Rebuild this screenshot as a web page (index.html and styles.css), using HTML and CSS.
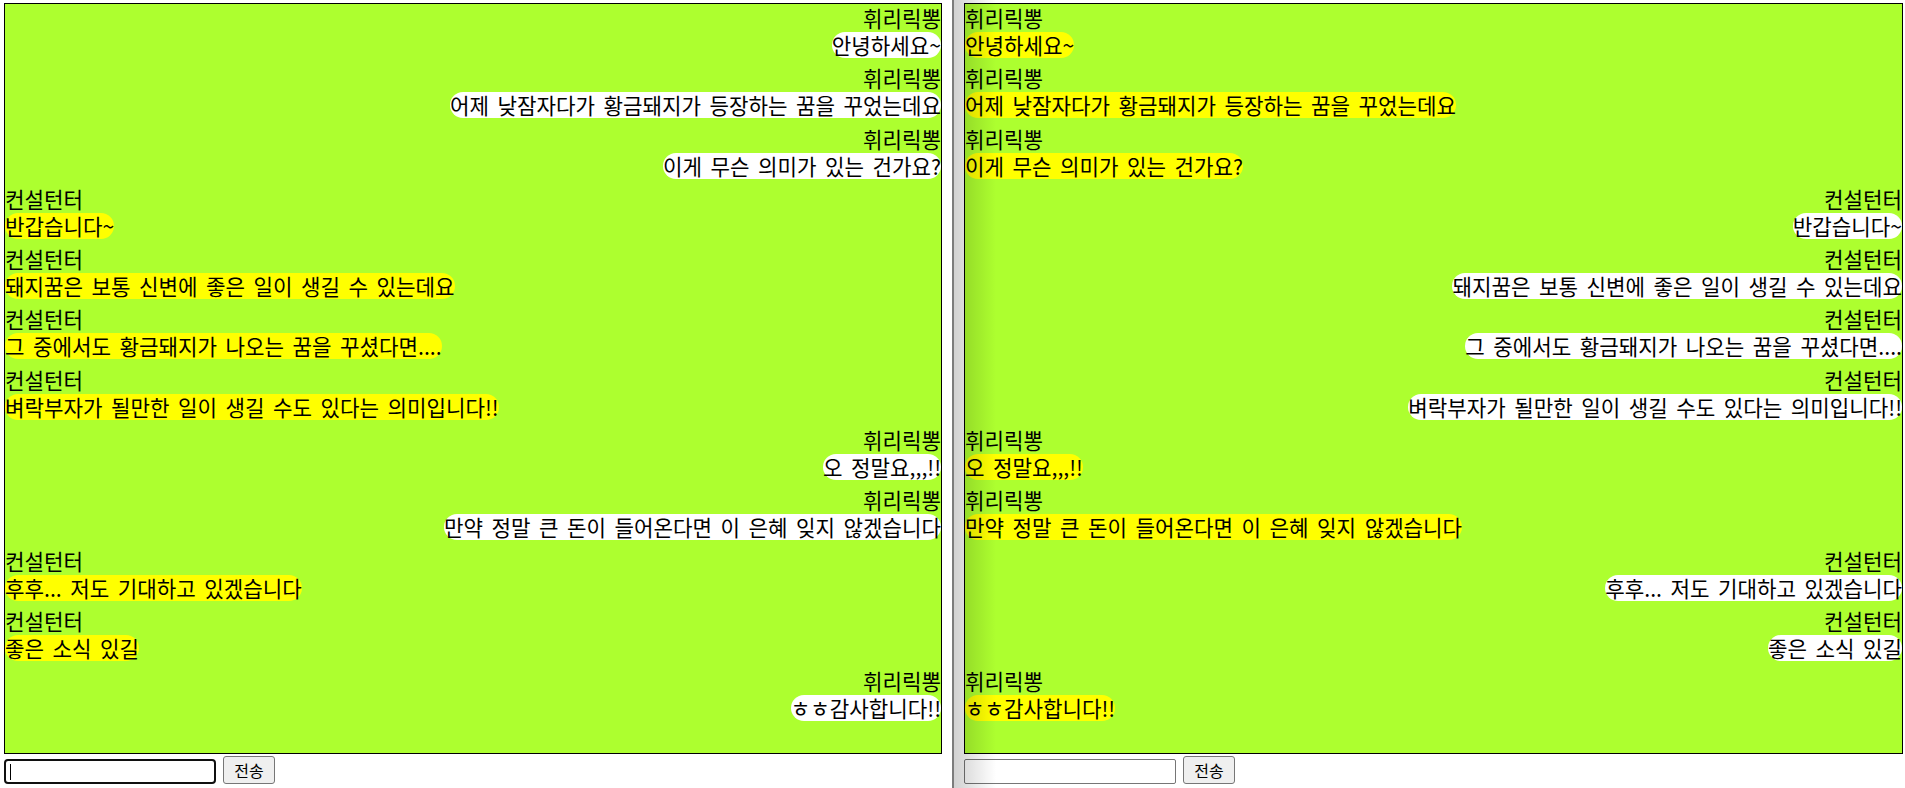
FILE: index.html
```html
<!DOCTYPE html>
<html lang="ko">
<head>
    <meta charset="UTF-8">
    <meta name="viewport" content="width=device-width, initial-scale=1.0">
    <title>채팅</title>
    <link rel="stylesheet" href="styles.css">
</head>
<body>

<div class="frames">
    <!-- 휘리릭뽕 화면 -->
    <div class="pane pane-left">
        <div class="chat-box">
            <div class="msg me"><div class="name">휘리릭뽕</div><span class="bubble white">안녕하세요~</span></div>
            <div class="msg me"><div class="name">휘리릭뽕</div><span class="bubble white">어제 낮잠자다가 황금돼지가 등장하는 꿈을 꾸었는데요</span></div>
            <div class="msg me"><div class="name">휘리릭뽕</div><span class="bubble white">이게 무슨 의미가 있는 건가요?</span></div>
            <div class="msg"><div class="name">컨설턴터</div><span class="bubble yellow">반갑습니다~</span></div>
            <div class="msg"><div class="name">컨설턴터</div><span class="bubble yellow">돼지꿈은 보통 신변에 좋은 일이 생길 수 있는데요</span></div>
            <div class="msg"><div class="name">컨설턴터</div><span class="bubble yellow">그 중에서도 황금돼지가 나오는 꿈을 꾸셨다면....</span></div>
            <div class="msg"><div class="name">컨설턴터</div><span class="bubble yellow">벼락부자가 될만한 일이 생길 수도 있다는 의미입니다!!</span></div>
            <div class="msg me"><div class="name">휘리릭뽕</div><span class="bubble white">오 정말요,,,!!</span></div>
            <div class="msg me"><div class="name">휘리릭뽕</div><span class="bubble white">만약 정말 큰 돈이 들어온다면 이 은혜 잊지 않겠습니다</span></div>
            <div class="msg"><div class="name">컨설턴터</div><span class="bubble yellow">후후... 저도 기대하고 있겠습니다</span></div>
            <div class="msg"><div class="name">컨설턴터</div><span class="bubble yellow">좋은 소식 있길</span></div>
            <div class="msg me"><div class="name">휘리릭뽕</div><span class="bubble white">ㅎㅎ감사합니다!!</span></div>
        </div>
        <div class="send-row">
            <div class="field focused"><input type="text" class="msg-input"></div>
            <button class="btn-send">전송</button>
        </div>
    </div>

    <div class="divider"></div>

    <!-- 컨설턴터 화면 -->
    <div class="pane pane-right">
        <div class="chat-box">
            <div class="msg"><div class="name">휘리릭뽕</div><span class="bubble yellow">안녕하세요~</span></div>
            <div class="msg"><div class="name">휘리릭뽕</div><span class="bubble yellow">어제 낮잠자다가 황금돼지가 등장하는 꿈을 꾸었는데요</span></div>
            <div class="msg"><div class="name">휘리릭뽕</div><span class="bubble yellow">이게 무슨 의미가 있는 건가요?</span></div>
            <div class="msg me"><div class="name">컨설턴터</div><span class="bubble white">반갑습니다~</span></div>
            <div class="msg me"><div class="name">컨설턴터</div><span class="bubble white">돼지꿈은 보통 신변에 좋은 일이 생길 수 있는데요</span></div>
            <div class="msg me"><div class="name">컨설턴터</div><span class="bubble white">그 중에서도 황금돼지가 나오는 꿈을 꾸셨다면....</span></div>
            <div class="msg me"><div class="name">컨설턴터</div><span class="bubble white">벼락부자가 될만한 일이 생길 수도 있다는 의미입니다!!</span></div>
            <div class="msg"><div class="name">휘리릭뽕</div><span class="bubble yellow">오 정말요,,,!!</span></div>
            <div class="msg"><div class="name">휘리릭뽕</div><span class="bubble yellow">만약 정말 큰 돈이 들어온다면 이 은혜 잊지 않겠습니다</span></div>
            <div class="msg me"><div class="name">컨설턴터</div><span class="bubble white">후후... 저도 기대하고 있겠습니다</span></div>
            <div class="msg me"><div class="name">컨설턴터</div><span class="bubble white">좋은 소식 있길</span></div>
            <div class="msg"><div class="name">휘리릭뽕</div><span class="bubble yellow">ㅎㅎ감사합니다!!</span></div>
        </div>
        <div class="send-row">
            <div class="field"><input type="text" class="msg-input"></div>
            <button class="btn-send">전송</button>
        </div>
    </div>
</div>

</body>
</html>
```

FILE: styles.css
```css
:root {
    --chat-bg: #adff2f;
    --bubble-yellow: #ffff00;
    --bubble-white: #ffffff;
}

html, body {
    margin: 0;
    height: 100%;
    background: #fff;
    overflow: hidden;
}

body {
    font-family: "Noto Sans CJK KR", "Noto Sans", sans-serif;
    color: #000;
}

.frames {
    display: flex;
    height: 100vh;
}

.pane {
    box-sizing: border-box;
    padding-top: 3px;
}

.pane-left {
    width: 952px;
    padding-left: 4px;
    padding-right: 10px;
}

.divider {
    width: 2px;
    background: #7c7c7c;
}

.pane-right {
    flex: 1;
    position: relative;
    padding-left: 10px;
    padding-right: 2px;
}

/* 프레임 경계 그림자 */
.pane-right::before {
    content: "";
    position: absolute;
    left: 0;
    top: 0;
    bottom: 0;
    width: 42px;
    background: linear-gradient(to right, rgba(0,0,0,0.18), rgba(0,0,0,0));
    pointer-events: none;
    z-index: 2;
}

.chat-box {
    box-sizing: border-box;
    height: 751px;
    border: 1px solid #000;
    background: var(--chat-bg);
    overflow: hidden;
}

.msg {
    display: flex;
    flex-direction: column;
    align-items: flex-start;
    margin-bottom: 6.3px;
    font-size: 21.2px;
    word-spacing: 2.6px;
}

.msg.me {
    align-items: flex-end;
}

.name {
    line-height: 28px;
    white-space: nowrap;
}

.bubble {
    line-height: 26px;
    border-radius: 13px;
    white-space: nowrap;
}

.bubble.white {
    background: var(--bubble-white);
}

.bubble.yellow {
    background: var(--bubble-yellow);
}

.send-row {
    display: flex;
    align-items: flex-end;
    gap: 7px;
    margin-top: 2px;
}

.field {
    position: relative;
}

.msg-input {
    box-sizing: border-box;
    display: block;
    width: 212px;
    height: 25px;
    margin: 0;
    border: 1px solid #767676;
    border-radius: 2px;
    background: #fff;
    font-family: "Noto Sans CJK KR", sans-serif;
    font-size: 13px;
    padding: 1px 2px;
}

.field.focused .msg-input {
    border: 2px solid #101010;
    border-radius: 4px;
    outline: none;
}

/* 깜빡이는 커서 */
.field.focused::after {
    content: "";
    position: absolute;
    left: 6px;
    top: 5px;
    width: 1px;
    height: 16px;
    background: #000;
}

.btn-send {
    box-sizing: border-box;
    width: 52px;
    height: 28px;
    margin: 0;
    padding: 0 6px;
    border: 1px solid #767676;
    border-radius: 3px;
    background: #efefef;
    color: #000;
    font-family: "Noto Sans CJK KR", sans-serif;
    font-size: 16px;
    line-height: 1;
    cursor: pointer;
}
```
